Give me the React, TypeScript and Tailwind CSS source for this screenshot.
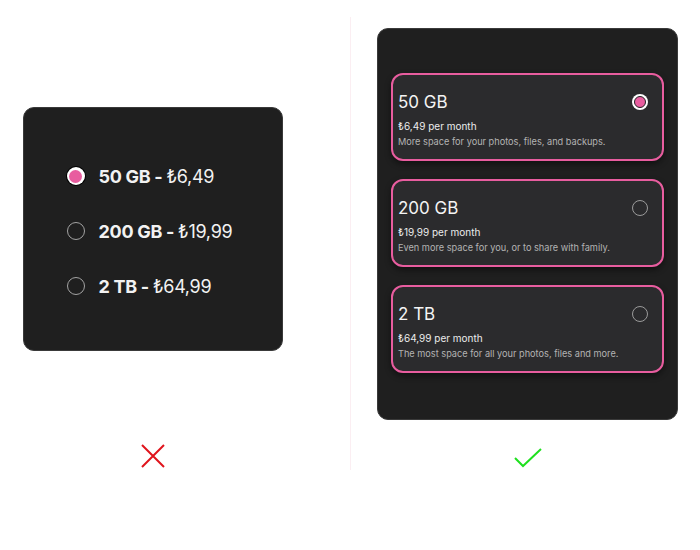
import React from "react";

const PINK = "#e85d9f";

type Plan = { size: string; price: string; note: string; selected?: boolean };

const plans: Plan[] = [
  { size: "50 GB", price: "₺6,49", note: "More space for your photos, files, and backups.", selected: true },
  { size: "200 GB", price: "₺19,99", note: "Even more space for you, or to share with family." },
  { size: "2 TB", price: "₺64,99", note: "The most space for all your photos, files and more." },
];

function SimpleRadio({ on }: { on?: boolean }) {
  return on ? (
    <span className="flex h-[18px] w-[18px] shrink-0 items-center justify-center rounded-full bg-white shadow-[0_0_0_1px_#000]">
      <span className="block h-[13px] w-[13px] rounded-full bg-[#e85d9f]" />
    </span>
  ) : (
    <span className="block h-[18px] w-[18px] shrink-0 rounded-full border-[1.5px] border-[#a3a3a3]" />
  );
}

function CardRadio({ on }: { on?: boolean }) {
  return on ? (
    <span className="flex h-[16px] w-[16px] shrink-0 items-center justify-center rounded-full bg-white">
      <span className="block h-[12px] w-[12px] rounded-full border border-[#222] bg-[#e85d9f]" />
    </span>
  ) : (
    <span className="block h-[16px] w-[16px] shrink-0 rounded-full border-[1.5px] border-[#9b9b9b]" />
  );
}

export default function App() {
  return (
    <div
      className="relative h-[550px] w-[700px] bg-white"
      style={{ fontFamily: "Inter, 'Noto Sans', sans-serif" }}
    >
      <div className="flex h-[550px] w-[700px]">
        {/* left column: plain radio list */}
        <div className="flex w-[350px] flex-col items-center">
          <div className="ml-[-45px] mt-[107px] flex h-[244px] w-[260px] flex-col justify-center gap-[33px] rounded-[11px] border border-[#3a3a3a] bg-[#1f1f1f] pl-[43px] pt-[4px]">
            {plans.map((p) => (
              <div key={p.size} className="flex h-[22px] items-center gap-[14px]">
                <SimpleRadio on={p.selected} />
                <span className="text-[18px] tracking-[-0.3px] text-[#f2f2f2]">
                  <span className="font-bold">{p.size}</span>
                  <span className="font-bold"> - </span>
                  <span className="font-normal">{p.price}</span>
                </span>
              </div>
            ))}
          </div>
          <svg className="ml-[-44px] mt-[92px]" width="26" height="26" viewBox="0 0 26 26">
            <path d="M2 2 L24 24 M24 2 L2 24" stroke="#e0141c" strokeWidth="2" />
          </svg>
        </div>

        {/* divider */}
        <div className="mt-[17px] h-[453px] w-px bg-[#fbeef2]" />

        {/* right column: card options */}
        <div className="flex flex-1 flex-col">
          <div className="ml-[26px] mt-[28px] flex h-[392px] w-[301px] flex-col gap-[18px] rounded-[11px] border border-[#3a3a3a] bg-[#1f1f1f] px-[13px] pt-[44px]">
            {plans.map((p) => (
              <div
                key={p.size}
                className="flex h-[88px] items-start justify-between rounded-[12px] border-2 bg-[#2b2b2d] pl-[5px] pr-[14px] pt-[16px] shadow-[0_3px_6px_rgba(0,0,0,0.45)]"
                style={{ borderColor: PINK }}
              >
                <div className="flex flex-col">
                  <span className="text-[17px] leading-[22px] text-[#f4f4f4]">{p.size}</span>
                  <span className="mt-[6px] text-[10px] font-normal leading-[14px] text-[#ececec]">
                    {p.price} per month
                  </span>
                  <span className="mt-[2px] text-[9.2px] leading-[14px] text-[#b3b3b3]">{p.note}</span>
                </div>
                <span className="mt-[3px] block">
                  <CardRadio on={p.selected} />
                </span>
              </div>
            ))}
          </div>
          <svg className="ml-[162px] mt-[26px]" width="30" height="22" viewBox="0 0 30 22">
            <path d="M2 12 L10 20 L28 3" stroke="#1fe01f" strokeWidth="2" fill="none" />
          </svg>
        </div>
      </div>
    </div>
  );
}
